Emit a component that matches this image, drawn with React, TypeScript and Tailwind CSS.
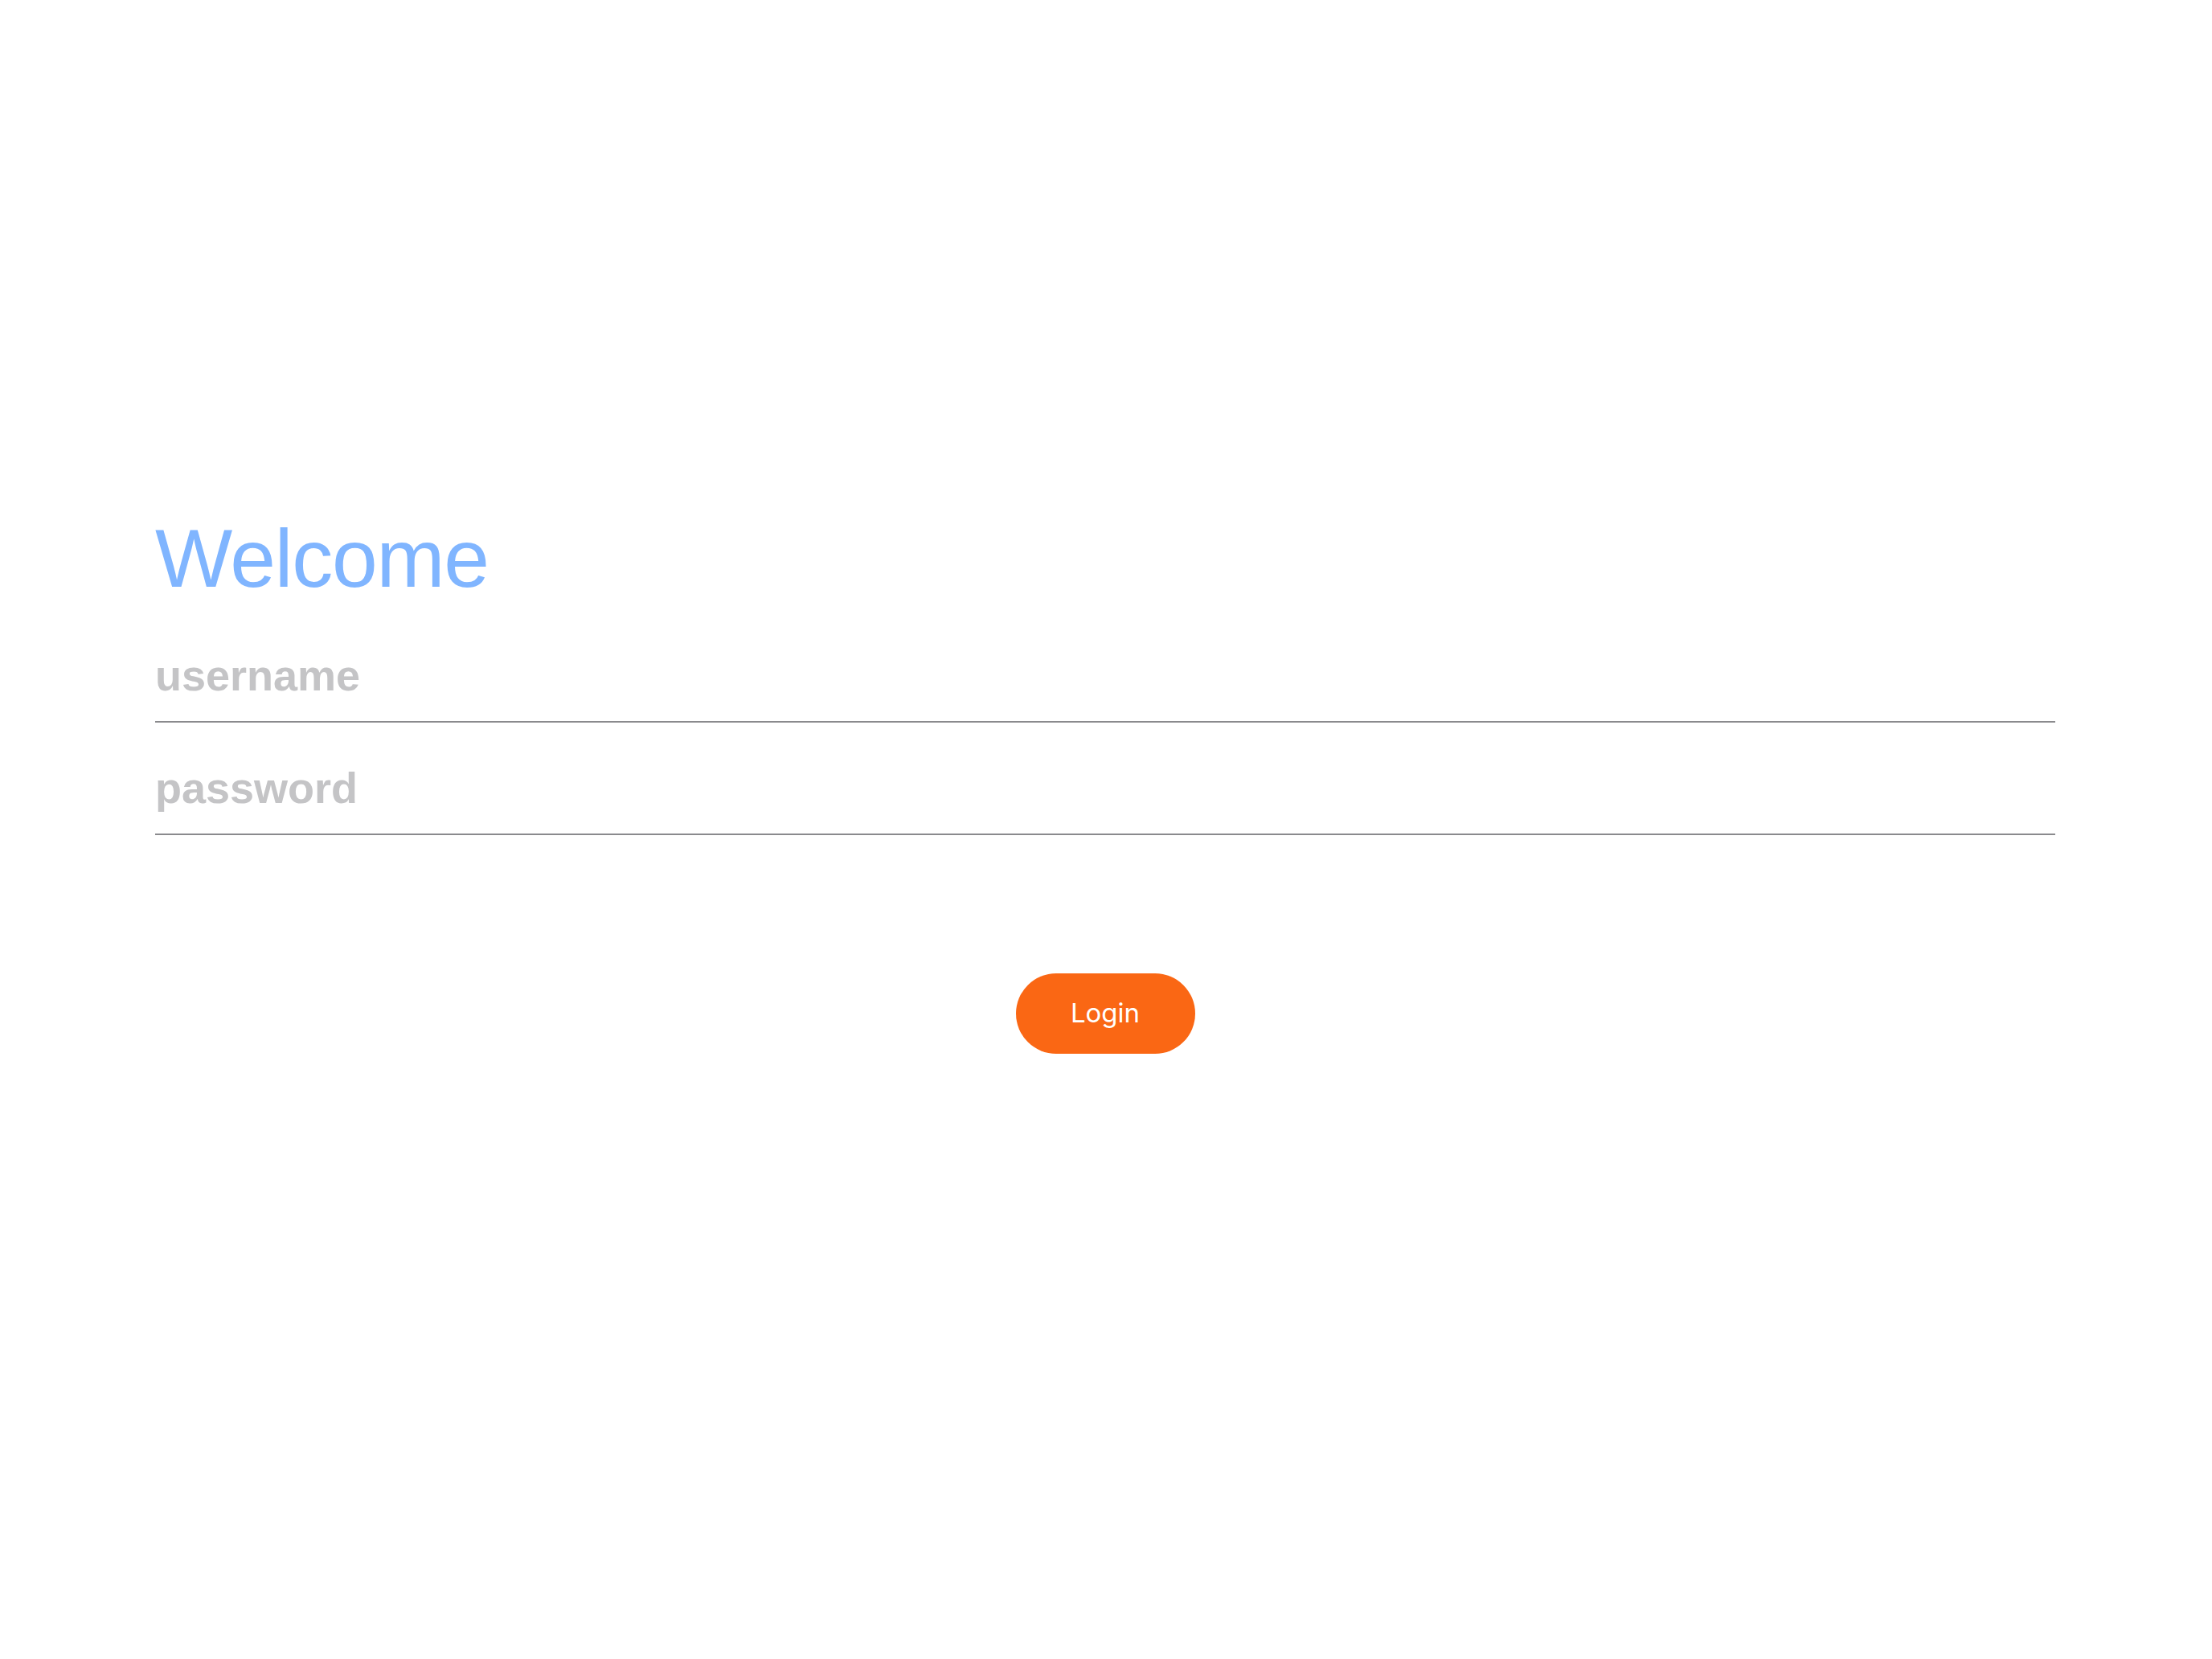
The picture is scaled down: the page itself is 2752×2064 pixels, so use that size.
import { useState } from "react"

const App = () => {
  const [username, setUsername] = useState("")
  const [password, setPassword] = useState("")

  return (
    <div className="min-h-screen w-full bg-white pt-[644px] pl-[193px] pr-[195px] font-['Liberation_Sans',Arial,sans-serif]">
      <h1 className="h-[102px] text-[102px] leading-none font-normal tracking-[-0.012em] text-[#80b5ff]">
        Welcome
      </h1>

      <div className="mt-[36px] border-b-2 border-[#8a8a8d]">
        <input
          type="text"
          value={username}
          onChange={(e) => setUsername(e.target.value)}
          placeholder="username"
          className="block h-[115px] w-full text-[54px] font-bold text-[#333] outline-none placeholder:text-[#c4c4c6]"
        />
      </div>

      <div className="mt-[23px] border-b-2 border-[#8a8a8d]">
        <input
          type="password"
          value={password}
          onChange={(e) => setPassword(e.target.value)}
          placeholder="password"
          className="block h-[115px] w-full text-[54px] font-bold text-[#333] outline-none placeholder:text-[#c4c4c6]"
        />
      </div>

      <div className="mt-[172px] flex justify-center">
        <button className="flex h-[100px] w-[223px] items-center justify-center rounded-full bg-[#fa6714] font-['Inter',sans-serif] text-[33px] text-white">
          Login
        </button>
      </div>
    </div>
  )
}

export default App
